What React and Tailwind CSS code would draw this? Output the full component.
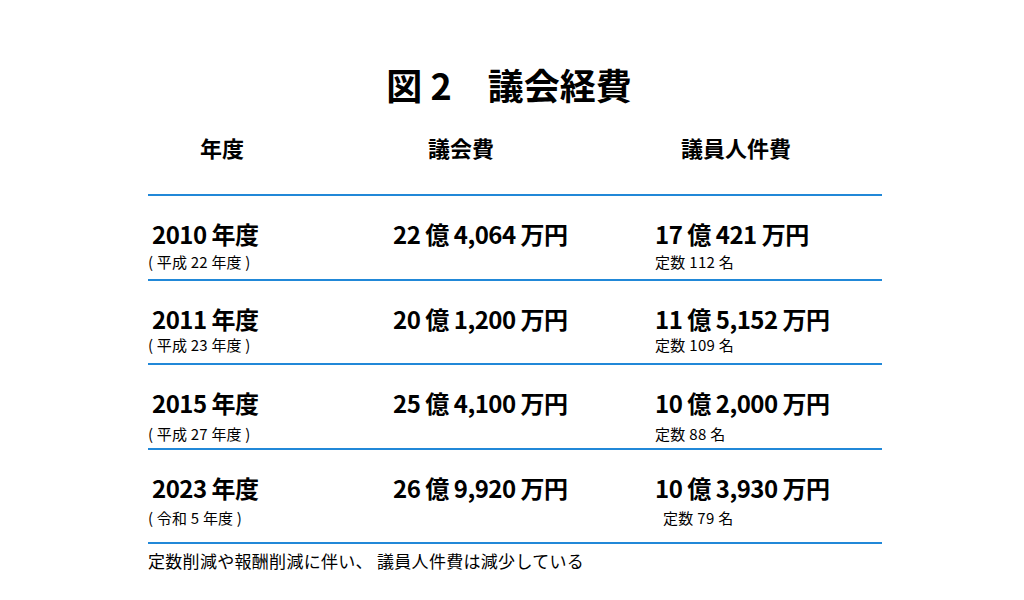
const rows = [
  {
    year: "2010 年度",
    era: "( 平成 22 年度 )",
    total: "22 億 4,064 万円",
    staff: "17 億 421 万円",
    seats: "定数 112 名",
    h: "h-[85px]",
    gap: "mt-[8px]",
    seatsPad: "",
  },
  {
    year: "2011 年度",
    era: "( 平成 23 年度 )",
    total: "20 億 1,200 万円",
    staff: "11 億 5,152 万円",
    seats: "定数 109 名",
    h: "h-[84px]",
    gap: "mt-[6px]",
    seatsPad: "",
  },
  {
    year: "2015 年度",
    era: "( 平成 27 年度 )",
    total: "25 億 4,100 万円",
    staff: "10 億 2,000 万円",
    seats: "定数 88 名",
    h: "h-[85px]",
    gap: "mt-[11px]",
    seatsPad: "",
  },
  {
    year: "2023 年度",
    era: "( 令和 5 年度 )",
    total: "26 億 9,920 万円",
    staff: "10 億 3,930 万円",
    seats: "定数 79 名",
    h: "h-[94px]",
    gap: "mt-[10px]",
    seatsPad: "pl-[8px]",
  },
];

const font = { fontFamily: '"Noto Sans CJK JP", "Noto Sans", sans-serif' };

const App = () => {
  return (
    <div className="w-[1024px] h-[600px] bg-white text-black overflow-hidden" style={font}>
      <div className="pt-[66px] pr-[6px] text-center text-[36px] leading-[36px] font-bold">
        図 2　議会経費
      </div>

      <div className="ml-[148px] w-[734px]">
        <div className="grid grid-cols-[245px_262px_227px] mt-[34px] text-[22px] leading-[22px] font-bold">
          <div className="pl-[52px]">年度</div>
          <div className="pl-[35px]">議会費</div>
          <div className="pl-[26px]">議員人件費</div>
        </div>

        <div className="mt-[36px]">
          {rows.map((row) => (
            <div
              key={row.year}
              className={`border-t-2 border-[#2188d8] ${row.h} pt-[26px] grid grid-cols-[245px_262px_227px]`}
            >
              <div>
                <div className="pl-[4px] text-[24px] leading-[24px] font-bold tracking-[-0.5px]">
                  {row.year}
                </div>
                <div className={`${row.gap} text-[15px] leading-[15px] tracking-[0.2px]`}>
                  {row.era}
                </div>
              </div>
              <div className="text-[24px] leading-[24px] font-bold tracking-[-0.5px]">
                {row.total}
              </div>
              <div>
                <div className="text-[24px] leading-[24px] font-bold tracking-[-0.5px]">
                  {row.staff}
                </div>
                <div className={`${row.gap} ${row.seatsPad} text-[15px] leading-[15px] tracking-[0.3px]`}>
                  {row.seats}
                </div>
              </div>
            </div>
          ))}
          <div className="border-t-2 border-[#2188d8] pt-[8px] text-[17px] leading-[17px] tracking-[0.3px]">
            定数削減や報酬削減に伴い、 議員人件費は減少している
          </div>
        </div>
      </div>
    </div>
  );
};

export default App;
